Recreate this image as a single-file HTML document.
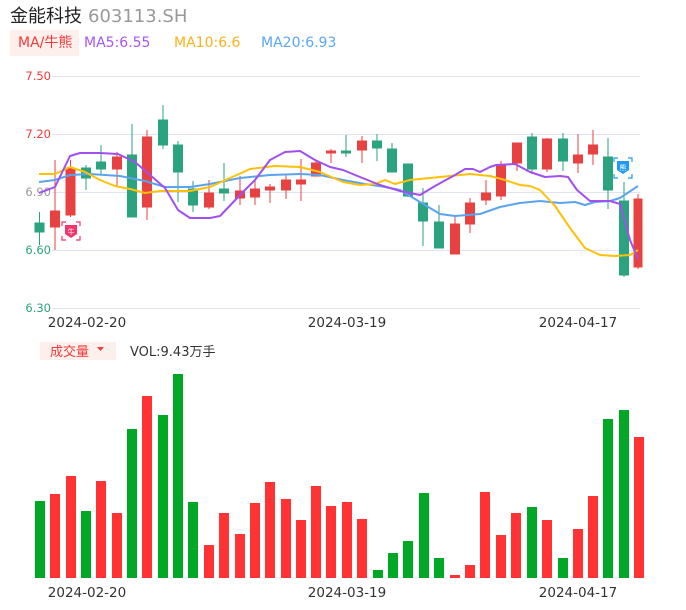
<!DOCTYPE html>
<html><head><meta charset="utf-8"><style>
body{margin:0;background:#fff;width:686px;height:606px;overflow:hidden;font-family:"DejaVu Sans","Noto Sans CJK SC",sans-serif}
svg text{font-family:"DejaVu Sans","Noto Sans CJK SC",sans-serif}
</style></head><body>
<svg width="686" height="606" viewBox="0 0 686 606" xmlns="http://www.w3.org/2000/svg">
<text x="10" y="22" font-size="18" fill="#222">金能科技</text>
<text x="88" y="22" font-size="18" fill="#999">603113.SH</text>
<rect x="10" y="30" width="69" height="26" fill="#fdf0ec"/>
<text x="18" y="47" font-size="14" fill="#f03a3a">MA/牛熊</text>
<text x="84" y="47" font-size="14" fill="#a855f7">MA5:6.55</text>
<text x="174" y="47" font-size="14" fill="#fbb117">MA10:6.6</text>
<text x="261" y="47" font-size="14" fill="#5aa7f0">MA20:6.93</text>
<g stroke="#e0e4f2" stroke-width="1">
<line x1="52" y1="76.5" x2="640" y2="76.5"/><line x1="52" y1="134.5" x2="640" y2="134.5"/><line x1="52" y1="192.5" x2="640" y2="192.5"/><line x1="52" y1="250.5" x2="640" y2="250.5"/><line x1="52" y1="308.5" x2="640" y2="308.5"/>
</g>
<g font-size="11.5" text-anchor="end">
<text x="51" y="80" fill="#f03a3a">7.50</text><text x="51" y="138" fill="#f03a3a">7.20</text><text x="51" y="196" fill="#999">6.90</text><text x="51" y="254" fill="#2aa37d">6.60</text><text x="51" y="312" fill="#2aa37d">6.30</text>
</g>
<g font-size="13.5" fill="#333" text-anchor="middle">
<text x="87" y="327">2024-02-20</text><text x="347" y="327">2024-03-19</text><text x="578" y="327">2024-04-17</text>
<text x="87" y="597">2024-02-20</text><text x="347" y="597">2024-03-19</text><text x="578" y="597">2024-04-17</text>
</g>
<g stroke-width="1">
<g fill="#2ba37f" stroke="#2ba37f">
<line x1="39.5" y1="212" x2="39.5" y2="245"/><rect x="35" y="223" width="9" height="9"/>
<line x1="86" y1="165" x2="86" y2="190"/><rect x="81.5" y="168" width="9" height="10"/>
<line x1="101" y1="145" x2="101" y2="175"/><rect x="96.5" y="162" width="9" height="7"/>
<line x1="132" y1="124" x2="132" y2="217"/><rect x="127.5" y="155" width="9" height="62"/>
<line x1="163" y1="105" x2="163" y2="149"/><rect x="158.5" y="120" width="9" height="25"/>
<line x1="178" y1="141" x2="178" y2="202"/><rect x="173.5" y="145" width="9" height="27"/>
<line x1="193" y1="181" x2="193" y2="212"/><rect x="188.5" y="189" width="9" height="16"/>
<line x1="224" y1="163" x2="224" y2="201"/><rect x="219.5" y="189" width="9" height="4"/>
<line x1="346" y1="135" x2="346" y2="157"/><rect x="341.5" y="151" width="9" height="2"/>
<line x1="377" y1="134" x2="377" y2="161"/><rect x="372.5" y="141" width="9" height="7"/>
<line x1="392" y1="143" x2="392" y2="172"/><rect x="387.5" y="149" width="9" height="23"/>
<line x1="408" y1="164" x2="408" y2="197"/><rect x="403.5" y="164" width="9" height="32"/>
<line x1="423" y1="188" x2="423" y2="246"/><rect x="418.5" y="203" width="9" height="18"/>
<line x1="439" y1="205" x2="439" y2="248"/><rect x="434.5" y="222" width="9" height="26"/>
<line x1="532" y1="133" x2="532" y2="174"/><rect x="527.5" y="137" width="9" height="32"/>
<line x1="563" y1="133" x2="563" y2="171"/><rect x="558.5" y="139" width="9" height="22"/>
<line x1="608" y1="138" x2="608" y2="209"/><rect x="603.5" y="157" width="9" height="33"/>
<line x1="624" y1="182" x2="624" y2="277"/><rect x="619.5" y="201" width="9" height="74"/>
</g>
<g fill="#e84142" stroke="#e84142">
<line x1="55" y1="160" x2="55" y2="250"/><rect x="50.5" y="211" width="9" height="16"/>
<line x1="70.5" y1="160" x2="70.5" y2="217"/><rect x="66" y="168" width="9" height="47"/>
<line x1="117" y1="152" x2="117" y2="186"/><rect x="112.5" y="157" width="9" height="12"/>
<line x1="147" y1="130" x2="147" y2="220"/><rect x="142.5" y="137" width="9" height="70"/>
<line x1="209" y1="180" x2="209" y2="209"/><rect x="204.5" y="193" width="9" height="14"/>
<line x1="240" y1="176" x2="240" y2="205"/><rect x="235.5" y="191" width="9" height="7"/>
<line x1="255" y1="181" x2="255" y2="205"/><rect x="250.5" y="189" width="9" height="8"/>
<line x1="270" y1="184" x2="270" y2="203"/><rect x="265.5" y="187" width="9" height="3"/>
<line x1="286" y1="175" x2="286" y2="199"/><rect x="281.5" y="180" width="9" height="10"/>
<line x1="301" y1="159" x2="301" y2="201"/><rect x="296.5" y="180" width="9" height="4"/>
<line x1="316" y1="161" x2="316" y2="176"/><rect x="311.5" y="163" width="9" height="13"/>
<line x1="331" y1="149" x2="331" y2="163"/><rect x="326.5" y="151" width="9" height="2"/>
<line x1="362" y1="136" x2="362" y2="163"/><rect x="357.5" y="141" width="9" height="9"/>
<line x1="455" y1="215" x2="455" y2="254"/><rect x="450.5" y="224" width="9" height="30"/>
<line x1="470" y1="198" x2="470" y2="233"/><rect x="465.5" y="203" width="9" height="21"/>
<line x1="486" y1="180" x2="486" y2="205"/><rect x="481.5" y="193" width="9" height="7"/>
<line x1="501" y1="161" x2="501" y2="200"/><rect x="496.5" y="166" width="9" height="30"/>
<line x1="517" y1="143" x2="517" y2="171"/><rect x="512.5" y="143" width="9" height="20"/>
<line x1="547" y1="138" x2="547" y2="172"/><rect x="542.5" y="139" width="9" height="30"/>
<line x1="578" y1="134" x2="578" y2="173"/><rect x="573.5" y="155" width="9" height="8"/>
<line x1="593" y1="130" x2="593" y2="165"/><rect x="588.5" y="145" width="9" height="9"/>
<line x1="638" y1="194" x2="638" y2="269"/><rect x="634" y="199" width="8" height="68"/>
</g>
</g>
<g fill="none" stroke-width="2" stroke-linejoin="round">
<polyline stroke="#5aa3ef" points="39,182 55,180 70,175 90,174 120,176 145,181 165,187 190,187 210,184 240,178 270,175 300,174 320,175 343,180 365,184 385,187 400,190 410,196 425,205 440,214 455,216 480,214 500,207 520,203 540,201 560,203 575,202 585,205 595,202 610,201 620,198 638,186"/>
<polyline stroke="#ffc107" points="39,174 55,174 70,167 85,172 100,180 115,186 130,189 145,193 160,191 190,191 210,187 230,178 250,169 275,166 300,167 320,172 343,182 360,185 375,184 385,180 395,184 410,180 430,178 450,176 470,174 490,176 505,180 520,185 530,186 540,190 555,206 570,228 585,248 600,255 615,256 630,255 638,250"/>
<polyline stroke="#a24ff0" points="39,193 55,187 70,156 80,153 100,153 118,154 135,162 150,175 165,188 178,210 190,218 210,218 220,216 240,195 255,180 270,160 285,152 300,151 315,160 330,167 343,170 360,177 380,185 400,191 420,195 435,186 455,175 465,169 473,169 480,172 490,167 496,165 515,164 530,172 545,177 560,176 568,177 577,190 590,201 610,201 620,204 630,240 638,259"/>
</g>
<g>
<path d="M62 226v-4h4M76 222h4v4M80 236v4h-4M66 240h-4v-4" stroke="#f5336a" stroke-width="1.2" fill="none"/>
<path d="M65 225h12v9l-6 4l-6-4z" fill="#f5336a"/>
<text x="71" y="234" font-size="7" fill="#fff" text-anchor="middle">牛</text>
</g>
<g>
<path d="M614 162v-4h4M628 158h4v4M632 174v4h-4M618 178h-4v-4" stroke="#1e9bf5" stroke-width="1.2" fill="none"/>
<path d="M617 161h12v9l-6 4l-6-4z" fill="#1e9bf5"/>
<text x="623" y="170" font-size="7" fill="#fff" text-anchor="middle">熊</text>
</g>
<rect x="40" y="342" width="76" height="18" fill="#fdf0ec"/>
<text x="50" y="356" font-size="13" fill="#f03a3a">成交量</text>
<path d="M97 347h7l-3.5 4z" fill="#f03a3a"/>
<text x="130" y="356" font-size="13" fill="#333">VOL:9.43万手</text>
<g fill="#00a826">
<rect x="35" y="501" width="10" height="77"/><rect x="81" y="511" width="10" height="67"/><rect x="127" y="429" width="10" height="149"/><rect x="158" y="415" width="10" height="163"/><rect x="173" y="374" width="10" height="204"/><rect x="188" y="502" width="10" height="76"/><rect x="373" y="570" width="10" height="8"/><rect x="388" y="553" width="10" height="25"/><rect x="403" y="541" width="10" height="37"/><rect x="419" y="493" width="10" height="85"/><rect x="434" y="558" width="10" height="20"/><rect x="527" y="507" width="10" height="71"/><rect x="558" y="558" width="10" height="20"/><rect x="603" y="419" width="10" height="159"/><rect x="619" y="410" width="10" height="168"/>
</g>
<g fill="#ff3333">
<rect x="50" y="494" width="10" height="84"/><rect x="66" y="476" width="10" height="102"/><rect x="96" y="481" width="10" height="97"/><rect x="112" y="513" width="10" height="65"/><rect x="142" y="396" width="10" height="182"/><rect x="204" y="545" width="10" height="33"/><rect x="219" y="513" width="10" height="65"/><rect x="235" y="534" width="10" height="44"/><rect x="250" y="503" width="10" height="75"/><rect x="265" y="482" width="10" height="96"/><rect x="281" y="499" width="10" height="79"/><rect x="296" y="520" width="10" height="58"/><rect x="311" y="486" width="10" height="92"/><rect x="326" y="506" width="10" height="72"/><rect x="342" y="502" width="10" height="76"/><rect x="357" y="519" width="10" height="59"/><rect x="450" y="575" width="10" height="3"/><rect x="465" y="565" width="10" height="13"/><rect x="480" y="492" width="10" height="86"/><rect x="496" y="535" width="10" height="43"/><rect x="511" y="513" width="10" height="65"/><rect x="542" y="520" width="10" height="58"/><rect x="573" y="529" width="10" height="49"/><rect x="588" y="496" width="10" height="82"/><rect x="634" y="437" width="10" height="141"/>
</g>
</svg>
</body></html>
